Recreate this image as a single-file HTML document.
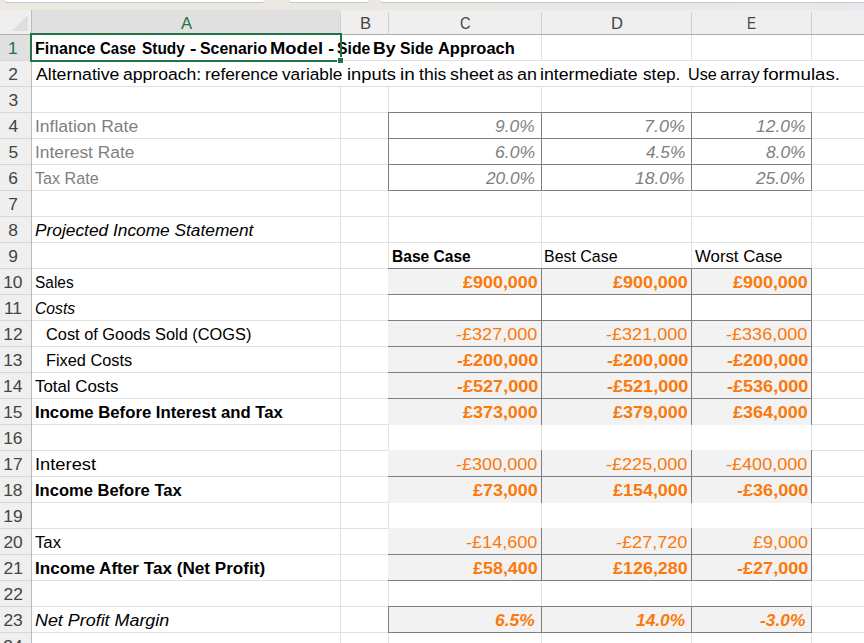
<!DOCTYPE html>
<html><head><meta charset="utf-8"><style>
html,body{margin:0;padding:0;width:864px;height:643px;overflow:hidden;background:#fff}
body{position:relative;font-family:"Liberation Sans",sans-serif;font-size:17.4px}
div{position:absolute}
span{position:absolute;white-space:pre;line-height:20px;height:20px;transform-origin:0 0}
</style></head><body>
<div style="left:0px;top:0px;width:864px;height:10px;background:linear-gradient(90deg,#ece8e2 0%,#ebe8e4 55%,#e6e9ed 100%);"></div>
<div style="left:4px;top:-6px;width:261px;height:8px;background:#fff;border-bottom:1px solid #c6c6c6;border-radius:0 0 4px 4px"></div>
<div style="left:288px;top:-6px;width:82px;height:8px;background:#fff;border-bottom:1px solid #c6c6c6;border-radius:0 0 4px 4px"></div>
<div style="left:379px;top:-6px;width:489px;height:8px;background:#fff;border-bottom:1px solid #c6c6c6;border-radius:0 0 4px 4px"></div>
<div style="left:0px;top:10px;width:864px;height:24px;background:#efefef;"></div>
<div style="left:32px;top:10px;width:308px;height:24px;background:#e0e0e0;"></div>
<div style="left:0px;top:34px;width:864px;height:1px;background:#adadad;"></div>
<div style="left:0px;top:35px;width:31px;height:608px;background:#efefef;"></div>
<div style="left:0px;top:35px;width:31px;height:25px;background:#e0e0e0;"></div>
<div style="left:31px;top:10px;width:1px;height:633px;background:#bababa;"></div>
<div style="left:12px;top:15px;width:0;height:0;border-left:16px solid transparent;border-bottom:16px solid #dedede"></div>
<div style="left:340px;top:12px;width:1px;height:22px;background:#d0d0d0;"></div>
<div style="left:388px;top:12px;width:1px;height:22px;background:#d0d0d0;"></div>
<div style="left:541px;top:12px;width:1px;height:22px;background:#d0d0d0;"></div>
<div style="left:691px;top:12px;width:1px;height:22px;background:#d0d0d0;"></div>
<div style="left:811px;top:12px;width:1px;height:22px;background:#d0d0d0;"></div>
<div style="left:32px;top:35px;width:832px;height:608px;background:#ffffff;"></div>
<div style="left:0px;top:60px;width:31px;height:1px;background:#d6d6d6;"></div>
<div style="left:32px;top:60px;width:832px;height:1px;background:#e1e1e1;"></div>
<div style="left:0px;top:86px;width:31px;height:1px;background:#d6d6d6;"></div>
<div style="left:32px;top:86px;width:832px;height:1px;background:#e1e1e1;"></div>
<div style="left:0px;top:112px;width:31px;height:1px;background:#d6d6d6;"></div>
<div style="left:32px;top:112px;width:832px;height:1px;background:#e1e1e1;"></div>
<div style="left:0px;top:138px;width:31px;height:1px;background:#d6d6d6;"></div>
<div style="left:32px;top:138px;width:832px;height:1px;background:#e1e1e1;"></div>
<div style="left:0px;top:164px;width:31px;height:1px;background:#d6d6d6;"></div>
<div style="left:32px;top:164px;width:832px;height:1px;background:#e1e1e1;"></div>
<div style="left:0px;top:190px;width:31px;height:1px;background:#d6d6d6;"></div>
<div style="left:32px;top:190px;width:832px;height:1px;background:#e1e1e1;"></div>
<div style="left:0px;top:216px;width:31px;height:1px;background:#d6d6d6;"></div>
<div style="left:32px;top:216px;width:832px;height:1px;background:#e1e1e1;"></div>
<div style="left:0px;top:242px;width:31px;height:1px;background:#d6d6d6;"></div>
<div style="left:32px;top:242px;width:832px;height:1px;background:#e1e1e1;"></div>
<div style="left:0px;top:268px;width:31px;height:1px;background:#d6d6d6;"></div>
<div style="left:32px;top:268px;width:832px;height:1px;background:#e1e1e1;"></div>
<div style="left:0px;top:294px;width:31px;height:1px;background:#d6d6d6;"></div>
<div style="left:32px;top:294px;width:832px;height:1px;background:#e1e1e1;"></div>
<div style="left:0px;top:320px;width:31px;height:1px;background:#d6d6d6;"></div>
<div style="left:32px;top:320px;width:832px;height:1px;background:#e1e1e1;"></div>
<div style="left:0px;top:346px;width:31px;height:1px;background:#d6d6d6;"></div>
<div style="left:32px;top:346px;width:832px;height:1px;background:#e1e1e1;"></div>
<div style="left:0px;top:372px;width:31px;height:1px;background:#d6d6d6;"></div>
<div style="left:32px;top:372px;width:832px;height:1px;background:#e1e1e1;"></div>
<div style="left:0px;top:398px;width:31px;height:1px;background:#d6d6d6;"></div>
<div style="left:32px;top:398px;width:832px;height:1px;background:#e1e1e1;"></div>
<div style="left:0px;top:424px;width:31px;height:1px;background:#d6d6d6;"></div>
<div style="left:32px;top:424px;width:832px;height:1px;background:#e1e1e1;"></div>
<div style="left:0px;top:450px;width:31px;height:1px;background:#d6d6d6;"></div>
<div style="left:32px;top:450px;width:832px;height:1px;background:#e1e1e1;"></div>
<div style="left:0px;top:476px;width:31px;height:1px;background:#d6d6d6;"></div>
<div style="left:32px;top:476px;width:832px;height:1px;background:#e1e1e1;"></div>
<div style="left:0px;top:502px;width:31px;height:1px;background:#d6d6d6;"></div>
<div style="left:32px;top:502px;width:832px;height:1px;background:#e1e1e1;"></div>
<div style="left:0px;top:528px;width:31px;height:1px;background:#d6d6d6;"></div>
<div style="left:32px;top:528px;width:832px;height:1px;background:#e1e1e1;"></div>
<div style="left:0px;top:554px;width:31px;height:1px;background:#d6d6d6;"></div>
<div style="left:32px;top:554px;width:832px;height:1px;background:#e1e1e1;"></div>
<div style="left:0px;top:580px;width:31px;height:1px;background:#d6d6d6;"></div>
<div style="left:32px;top:580px;width:832px;height:1px;background:#e1e1e1;"></div>
<div style="left:0px;top:606px;width:31px;height:1px;background:#d6d6d6;"></div>
<div style="left:32px;top:606px;width:832px;height:1px;background:#e1e1e1;"></div>
<div style="left:0px;top:632px;width:31px;height:1px;background:#d6d6d6;"></div>
<div style="left:32px;top:632px;width:832px;height:1px;background:#e1e1e1;"></div>
<div style="left:340px;top:87px;width:1px;height:556px;background:#e1e1e1;"></div>
<div style="left:388px;top:87px;width:1px;height:556px;background:#e1e1e1;"></div>
<div style="left:541px;top:35px;width:1px;height:25px;background:#e1e1e1;"></div>
<div style="left:541px;top:87px;width:1px;height:556px;background:#e1e1e1;"></div>
<div style="left:691px;top:35px;width:1px;height:25px;background:#e1e1e1;"></div>
<div style="left:691px;top:87px;width:1px;height:556px;background:#e1e1e1;"></div>
<div style="left:811px;top:35px;width:1px;height:25px;background:#e1e1e1;"></div>
<div style="left:811px;top:87px;width:1px;height:556px;background:#e1e1e1;"></div>
<div style="left:388px;top:268px;width:424px;height:27px;background:#f2f2f2;"></div>
<div style="left:388px;top:320px;width:424px;height:27px;background:#f2f2f2;"></div>
<div style="left:388px;top:346px;width:424px;height:27px;background:#f2f2f2;"></div>
<div style="left:388px;top:372px;width:424px;height:27px;background:#f2f2f2;"></div>
<div style="left:388px;top:398px;width:424px;height:27px;background:#f2f2f2;"></div>
<div style="left:388px;top:450px;width:424px;height:27px;background:#f2f2f2;"></div>
<div style="left:388px;top:476px;width:424px;height:27px;background:#f2f2f2;"></div>
<div style="left:388px;top:528px;width:424px;height:27px;background:#f2f2f2;"></div>
<div style="left:388px;top:554px;width:424px;height:27px;background:#f2f2f2;"></div>
<div style="left:388px;top:606px;width:424px;height:27px;background:#f2f2f2;"></div>
<div style="left:388px;top:112px;width:1px;height:79px;background:#7f7f7f;"></div>
<div style="left:541px;top:112px;width:1px;height:79px;background:#7f7f7f;"></div>
<div style="left:691px;top:112px;width:1px;height:79px;background:#7f7f7f;"></div>
<div style="left:811px;top:112px;width:1px;height:79px;background:#7f7f7f;"></div>
<div style="left:388px;top:112px;width:424px;height:1px;background:#7f7f7f;"></div>
<div style="left:388px;top:138px;width:424px;height:1px;background:#7f7f7f;"></div>
<div style="left:388px;top:164px;width:424px;height:1px;background:#7f7f7f;"></div>
<div style="left:388px;top:190px;width:424px;height:1px;background:#7f7f7f;"></div>
<div style="left:541px;top:268px;width:1px;height:157px;background:#7f7f7f;"></div>
<div style="left:691px;top:268px;width:1px;height:157px;background:#7f7f7f;"></div>
<div style="left:811px;top:268px;width:1px;height:157px;background:#7f7f7f;"></div>
<div style="left:388px;top:268px;width:424px;height:1px;background:#7f7f7f;"></div>
<div style="left:388px;top:294px;width:424px;height:1px;background:#7f7f7f;"></div>
<div style="left:388px;top:320px;width:424px;height:1px;background:#7f7f7f;"></div>
<div style="left:388px;top:346px;width:424px;height:1px;background:#7f7f7f;"></div>
<div style="left:388px;top:372px;width:424px;height:1px;background:#7f7f7f;"></div>
<div style="left:388px;top:398px;width:424px;height:1px;background:#7f7f7f;"></div>
<div style="left:541px;top:450px;width:1px;height:53px;background:#7f7f7f;"></div>
<div style="left:691px;top:450px;width:1px;height:53px;background:#7f7f7f;"></div>
<div style="left:811px;top:450px;width:1px;height:53px;background:#7f7f7f;"></div>
<div style="left:388px;top:476px;width:424px;height:1px;background:#7f7f7f;"></div>
<div style="left:541px;top:528px;width:1px;height:53px;background:#7f7f7f;"></div>
<div style="left:691px;top:528px;width:1px;height:53px;background:#7f7f7f;"></div>
<div style="left:811px;top:528px;width:1px;height:53px;background:#7f7f7f;"></div>
<div style="left:388px;top:554px;width:424px;height:1px;background:#7f7f7f;"></div>
<div style="left:388px;top:580px;width:424px;height:1px;background:#7f7f7f;"></div>
<div style="left:388px;top:606px;width:1px;height:27px;background:#7f7f7f;"></div>
<div style="left:541px;top:606px;width:1px;height:27px;background:#7f7f7f;"></div>
<div style="left:691px;top:606px;width:1px;height:27px;background:#7f7f7f;"></div>
<div style="left:811px;top:606px;width:1px;height:27px;background:#7f7f7f;"></div>
<div style="left:388px;top:606px;width:424px;height:1px;background:#7f7f7f;"></div>
<div style="left:388px;top:632px;width:424px;height:1px;background:#7f7f7f;"></div>
<span style="left:34.79px;top:38.25px;color:#000000;font-weight:bold;font-style:normal;transform:scaleX(0.9208)">Finance</span>
<span style="left:100.00px;top:38.25px;color:#000000;font-weight:bold;font-style:normal;transform:scaleX(0.8606)">Case</span>
<span style="left:141.86px;top:38.25px;color:#000000;font-weight:bold;font-style:normal;transform:scaleX(0.8857)">Study</span>
<span style="left:190.33px;top:38.25px;color:#000000;font-weight:bold;font-style:normal;transform:scaleX(1.1111)">-</span>
<span style="left:199.84px;top:38.25px;color:#000000;font-weight:bold;font-style:normal;transform:scaleX(0.9133)">Scenario</span>
<span style="left:269.94px;top:38.25px;color:#000000;font-weight:bold;font-style:normal;transform:scaleX(1.0577)">Model</span>
<span style="left:328.20px;top:38.25px;color:#000000;font-weight:bold;font-style:normal;transform:scaleX(1.0000)">-</span>
<span style="left:336.85px;top:38.25px;color:#000000;font-weight:bold;font-style:normal;transform:scaleX(0.9056)">Side</span>
<span style="left:373.28px;top:38.25px;color:#000000;font-weight:bold;font-style:normal;transform:scaleX(1.0159)">By</span>
<span style="left:399.95px;top:38.25px;color:#000000;font-weight:bold;font-style:normal;transform:scaleX(0.9056)">Side</span>
<span style="left:437.52px;top:38.25px;color:#000000;font-weight:bold;font-style:normal;transform:scaleX(0.9451)">Approach</span>
<span style="left:35.50px;top:64.25px;color:#000000;font-weight:normal;font-style:normal;transform:scaleX(1.0143)">Alternative</span>
<span style="left:122.79px;top:64.25px;color:#000000;font-weight:normal;font-style:normal;transform:scaleX(1.0112)">approach:</span>
<span style="left:204.70px;top:64.25px;color:#000000;font-weight:normal;font-style:normal;transform:scaleX(0.9968)">reference</span>
<span style="left:282.00px;top:64.25px;color:#000000;font-weight:normal;font-style:normal;transform:scaleX(0.9908)">variable</span>
<span style="left:346.74px;top:64.25px;color:#000000;font-weight:normal;font-style:normal;transform:scaleX(1.0552)">inputs</span>
<span style="left:400.20px;top:64.25px;color:#000000;font-weight:normal;font-style:normal;transform:scaleX(1.0910)">in</span>
<span style="left:418.50px;top:64.25px;color:#000000;font-weight:normal;font-style:normal;transform:scaleX(1.0123)">this</span>
<span style="left:449.79px;top:64.25px;color:#000000;font-weight:normal;font-style:normal;transform:scaleX(1.0277)">sheet</span>
<span style="left:496.88px;top:64.25px;color:#000000;font-weight:normal;font-style:normal;transform:scaleX(0.8842)">as</span>
<span style="left:516.88px;top:64.25px;color:#000000;font-weight:normal;font-style:normal;transform:scaleX(1.0298)">an</span>
<span style="left:539.68px;top:64.25px;color:#000000;font-weight:normal;font-style:normal;transform:scaleX(1.0205)">intermediate</span>
<span style="left:642.50px;top:64.25px;color:#000000;font-weight:normal;font-style:normal;transform:scaleX(0.9891)">step.</span>
<span style="left:687.59px;top:64.25px;color:#000000;font-weight:normal;font-style:normal;transform:scaleX(0.9287)">Use</span>
<span style="left:720.30px;top:64.25px;color:#000000;font-weight:normal;font-style:normal;transform:scaleX(1.0015)">array</span>
<span style="left:762.78px;top:64.25px;color:#000000;font-weight:normal;font-style:normal;transform:scaleX(1.0771)">formulas.</span>
<span style="left:34.69px;top:116.25px;color:#7f7f7f;font-weight:normal;font-style:normal;transform:scaleX(1.0064)">Inflation Rate</span>
<span style="left:34.70px;top:142.25px;color:#7f7f7f;font-weight:normal;font-style:normal;transform:scaleX(0.9986)">Interest Rate</span>
<span style="left:35.22px;top:168.25px;color:#7f7f7f;font-weight:normal;font-style:normal;transform:scaleX(0.9278)">Tax Rate</span>
<span style="left:495.30px;top:116.25px;color:#7f7f7f;font-weight:normal;font-style:italic;transform:scaleX(1.0003)">9.0%</span>
<span style="left:643.94px;top:116.25px;color:#7f7f7f;font-weight:normal;font-style:italic;transform:scaleX(1.0353)">7.0%</span>
<span style="left:755.50px;top:116.25px;color:#7f7f7f;font-weight:normal;font-style:italic;transform:scaleX(1.0049)">12.0%</span>
<span style="left:494.89px;top:142.25px;color:#7f7f7f;font-weight:normal;font-style:italic;transform:scaleX(1.0108)">6.0%</span>
<span style="left:645.70px;top:142.25px;color:#7f7f7f;font-weight:normal;font-style:italic;transform:scaleX(0.9900)">4.5%</span>
<span style="left:765.50px;top:142.25px;color:#7f7f7f;font-weight:normal;font-style:italic;transform:scaleX(0.9977)">8.0%</span>
<span style="left:486.00px;top:168.25px;color:#7f7f7f;font-weight:normal;font-style:italic;transform:scaleX(0.9925)">20.0%</span>
<span style="left:635.40px;top:168.25px;color:#7f7f7f;font-weight:normal;font-style:italic;transform:scaleX(1.0049)">18.0%</span>
<span style="left:756.10px;top:168.25px;color:#7f7f7f;font-weight:normal;font-style:italic;transform:scaleX(0.9925)">25.0%</span>
<span style="left:35.00px;top:220.25px;color:#000000;font-weight:normal;font-style:italic;transform:scaleX(0.9954)">Projected Income Statement</span>
<span style="left:392.12px;top:246.25px;color:#000000;font-weight:bold;font-style:normal;transform:scaleX(0.8952)">Base Case</span>
<span style="left:544.32px;top:246.25px;color:#000000;font-weight:normal;font-style:normal;transform:scaleX(0.9169)">Best Case</span>
<span style="left:695.20px;top:246.25px;color:#000000;font-weight:normal;font-style:normal;transform:scaleX(0.9656)">Worst Case</span>
<span style="left:34.98px;top:272.25px;color:#000000;font-weight:normal;font-style:normal;transform:scaleX(0.8881)">Sales</span>
<span style="left:34.79px;top:298.25px;color:#000000;font-weight:normal;font-style:italic;transform:scaleX(0.9035)">Costs</span>
<span style="left:46.45px;top:324.25px;color:#000000;font-weight:normal;font-style:normal;transform:scaleX(0.9403)">Cost of Goods Sold (COGS)</span>
<span style="left:46.49px;top:350.25px;color:#000000;font-weight:normal;font-style:normal;transform:scaleX(0.9392)">Fixed Costs</span>
<span style="left:35.31px;top:376.25px;color:#000000;font-weight:normal;font-style:normal;transform:scaleX(0.9687)">Total Costs</span>
<span style="left:34.54px;top:402.25px;color:#000000;font-weight:bold;font-style:normal;transform:scaleX(0.9619)">Income Before Interest and Tax</span>
<span style="left:34.51px;top:454.25px;color:#000000;font-weight:normal;font-style:normal;transform:scaleX(1.0533)">Interest</span>
<span style="left:34.95px;top:480.25px;color:#000000;font-weight:bold;font-style:normal;transform:scaleX(0.9503)">Income Before Tax</span>
<span style="left:35.31px;top:532.25px;color:#000000;font-weight:normal;font-style:normal;transform:scaleX(0.9615)">Tax</span>
<span style="left:34.92px;top:558.25px;color:#000000;font-weight:bold;font-style:normal;transform:scaleX(0.9841)">Income After Tax (Net Profit)</span>
<span style="left:35.49px;top:610.25px;color:#000000;font-weight:normal;font-style:italic;transform:scaleX(1.0289)">Net Profit Margin</span>
<span style="left:463.10px;top:272.25px;color:#fb790a;font-weight:bold;font-style:normal;transform:scaleX(1.0307)">£900,000</span>
<span style="left:613.10px;top:272.25px;color:#fb790a;font-weight:bold;font-style:normal;transform:scaleX(1.0307)">£900,000</span>
<span style="left:733.10px;top:272.25px;color:#fb790a;font-weight:bold;font-style:normal;transform:scaleX(1.0307)">£900,000</span>
<span style="left:456.47px;top:324.25px;color:#fb790a;font-weight:normal;font-style:normal;transform:scaleX(1.0391)">-£327,000</span>
<span style="left:606.47px;top:324.25px;color:#fb790a;font-weight:normal;font-style:normal;transform:scaleX(1.0391)">-£321,000</span>
<span style="left:726.47px;top:324.25px;color:#fb790a;font-weight:normal;font-style:normal;transform:scaleX(1.0391)">-£336,000</span>
<span style="left:456.58px;top:350.25px;color:#fb790a;font-weight:bold;font-style:normal;transform:scaleX(1.0377)">-£200,000</span>
<span style="left:606.58px;top:350.25px;color:#fb790a;font-weight:bold;font-style:normal;transform:scaleX(1.0377)">-£200,000</span>
<span style="left:726.58px;top:350.25px;color:#fb790a;font-weight:bold;font-style:normal;transform:scaleX(1.0377)">-£200,000</span>
<span style="left:456.58px;top:376.25px;color:#fb790a;font-weight:bold;font-style:normal;transform:scaleX(1.0377)">-£527,000</span>
<span style="left:606.58px;top:376.25px;color:#fb790a;font-weight:bold;font-style:normal;transform:scaleX(1.0377)">-£521,000</span>
<span style="left:726.58px;top:376.25px;color:#fb790a;font-weight:bold;font-style:normal;transform:scaleX(1.0377)">-£536,000</span>
<span style="left:463.10px;top:402.25px;color:#fb790a;font-weight:bold;font-style:normal;transform:scaleX(1.0307)">£373,000</span>
<span style="left:613.10px;top:402.25px;color:#fb790a;font-weight:bold;font-style:normal;transform:scaleX(1.0307)">£379,000</span>
<span style="left:733.10px;top:402.25px;color:#fb790a;font-weight:bold;font-style:normal;transform:scaleX(1.0307)">£364,000</span>
<span style="left:456.47px;top:454.25px;color:#fb790a;font-weight:normal;font-style:normal;transform:scaleX(1.0391)">-£300,000</span>
<span style="left:606.47px;top:454.25px;color:#fb790a;font-weight:normal;font-style:normal;transform:scaleX(1.0391)">-£225,000</span>
<span style="left:726.47px;top:454.25px;color:#fb790a;font-weight:normal;font-style:normal;transform:scaleX(1.0391)">-£400,000</span>
<span style="left:473.10px;top:480.25px;color:#fb790a;font-weight:bold;font-style:normal;transform:scaleX(1.0303)">£73,000</span>
<span style="left:613.10px;top:480.25px;color:#fb790a;font-weight:bold;font-style:normal;transform:scaleX(1.0307)">£154,000</span>
<span style="left:736.58px;top:480.25px;color:#fb790a;font-weight:bold;font-style:normal;transform:scaleX(1.0384)">-£36,000</span>
<span style="left:466.47px;top:532.25px;color:#fb790a;font-weight:normal;font-style:normal;transform:scaleX(1.0399)">-£14,600</span>
<span style="left:616.47px;top:532.25px;color:#fb790a;font-weight:normal;font-style:normal;transform:scaleX(1.0399)">-£27,720</span>
<span style="left:752.79px;top:532.25px;color:#fb790a;font-weight:normal;font-style:normal;transform:scaleX(1.0356)">£9,000</span>
<span style="left:473.10px;top:558.25px;color:#fb790a;font-weight:bold;font-style:normal;transform:scaleX(1.0303)">£58,400</span>
<span style="left:613.10px;top:558.25px;color:#fb790a;font-weight:bold;font-style:normal;transform:scaleX(1.0307)">£126,280</span>
<span style="left:736.58px;top:558.25px;color:#fb790a;font-weight:bold;font-style:normal;transform:scaleX(1.0384)">-£27,000</span>
<span style="left:495.10px;top:610.25px;color:#fb790a;font-weight:bold;font-style:italic;transform:scaleX(1.0029)">6.5%</span>
<span style="left:635.70px;top:610.25px;color:#fb790a;font-weight:bold;font-style:italic;transform:scaleX(0.9966)">14.0%</span>
<span style="left:759.50px;top:610.25px;color:#fb790a;font-weight:bold;font-style:italic;transform:scaleX(0.9981)">-3.0%</span>
<span style="left:181.00px;top:13.25px;color:#217346;font-weight:normal;font-style:normal;transform:scaleX(0.9569)">A</span>
<span style="left:359.76px;top:13.25px;color:#444444;font-weight:normal;font-style:normal;transform:scaleX(0.9570)">B</span>
<span style="left:459.82px;top:13.25px;color:#444444;font-weight:normal;font-style:normal;transform:scaleX(0.8482)">C</span>
<span style="left:610.97px;top:13.25px;color:#444444;font-weight:normal;font-style:normal;transform:scaleX(0.9519)">D</span>
<span style="left:747.21px;top:13.25px;color:#444444;font-weight:normal;font-style:normal;transform:scaleX(0.7789)">E</span>
<span style="left:8.10px;top:38.25px;color:#217346;font-weight:normal;font-style:normal;transform:scaleX(1.0000)">1</span>
<span style="left:8.35px;top:64.25px;color:#444444;font-weight:normal;font-style:normal;transform:scaleX(1.0000)">2</span>
<span style="left:8.40px;top:90.25px;color:#444444;font-weight:normal;font-style:normal;transform:scaleX(1.0000)">3</span>
<span style="left:8.40px;top:116.25px;color:#444444;font-weight:normal;font-style:normal;transform:scaleX(1.0000)">4</span>
<span style="left:8.40px;top:142.25px;color:#444444;font-weight:normal;font-style:normal;transform:scaleX(1.0000)">5</span>
<span style="left:8.30px;top:168.25px;color:#444444;font-weight:normal;font-style:normal;transform:scaleX(1.0000)">6</span>
<span style="left:8.35px;top:194.25px;color:#444444;font-weight:normal;font-style:normal;transform:scaleX(1.0000)">7</span>
<span style="left:8.35px;top:220.25px;color:#444444;font-weight:normal;font-style:normal;transform:scaleX(1.0000)">8</span>
<span style="left:8.35px;top:246.25px;color:#444444;font-weight:normal;font-style:normal;transform:scaleX(1.0000)">9</span>
<span style="left:3.21px;top:272.25px;color:#444444;font-weight:normal;font-style:normal;transform:scaleX(1.0000)">10</span>
<span style="left:3.91px;top:298.25px;color:#444444;font-weight:normal;font-style:normal;transform:scaleX(1.0000)">11</span>
<span style="left:3.26px;top:324.25px;color:#444444;font-weight:normal;font-style:normal;transform:scaleX(1.0000)">12</span>
<span style="left:3.21px;top:350.25px;color:#444444;font-weight:normal;font-style:normal;transform:scaleX(1.0000)">13</span>
<span style="left:3.11px;top:376.25px;color:#444444;font-weight:normal;font-style:normal;transform:scaleX(1.0000)">14</span>
<span style="left:3.21px;top:402.25px;color:#444444;font-weight:normal;font-style:normal;transform:scaleX(1.0000)">15</span>
<span style="left:3.21px;top:428.25px;color:#444444;font-weight:normal;font-style:normal;transform:scaleX(1.0000)">16</span>
<span style="left:3.26px;top:454.25px;color:#444444;font-weight:normal;font-style:normal;transform:scaleX(1.0000)">17</span>
<span style="left:3.21px;top:480.25px;color:#444444;font-weight:normal;font-style:normal;transform:scaleX(1.0000)">18</span>
<span style="left:3.26px;top:506.25px;color:#444444;font-weight:normal;font-style:normal;transform:scaleX(1.0000)">19</span>
<span style="left:3.46px;top:532.25px;color:#444444;font-weight:normal;font-style:normal;transform:scaleX(1.0000)">20</span>
<span style="left:3.51px;top:558.25px;color:#444444;font-weight:normal;font-style:normal;transform:scaleX(1.0000)">21</span>
<span style="left:3.51px;top:584.25px;color:#444444;font-weight:normal;font-style:normal;transform:scaleX(1.0000)">22</span>
<span style="left:3.46px;top:610.25px;color:#444444;font-weight:normal;font-style:normal;transform:scaleX(1.0000)">23</span>
<span style="left:3.36px;top:636.25px;color:#444444;font-weight:normal;font-style:normal;transform:scaleX(1.0000)">24</span>
<div style="left:30px;top:33px;width:312px;height:2px;background:#217346;"></div>
<div style="left:30px;top:33px;width:2px;height:29px;background:#217346;"></div>
<div style="left:340px;top:33px;width:2px;height:24px;background:#217346;"></div>
<div style="left:30px;top:60px;width:307px;height:2px;background:#217346;"></div>
<div style="left:338px;top:58px;width:5px;height:5px;background:#217346;"></div>
</body></html>
